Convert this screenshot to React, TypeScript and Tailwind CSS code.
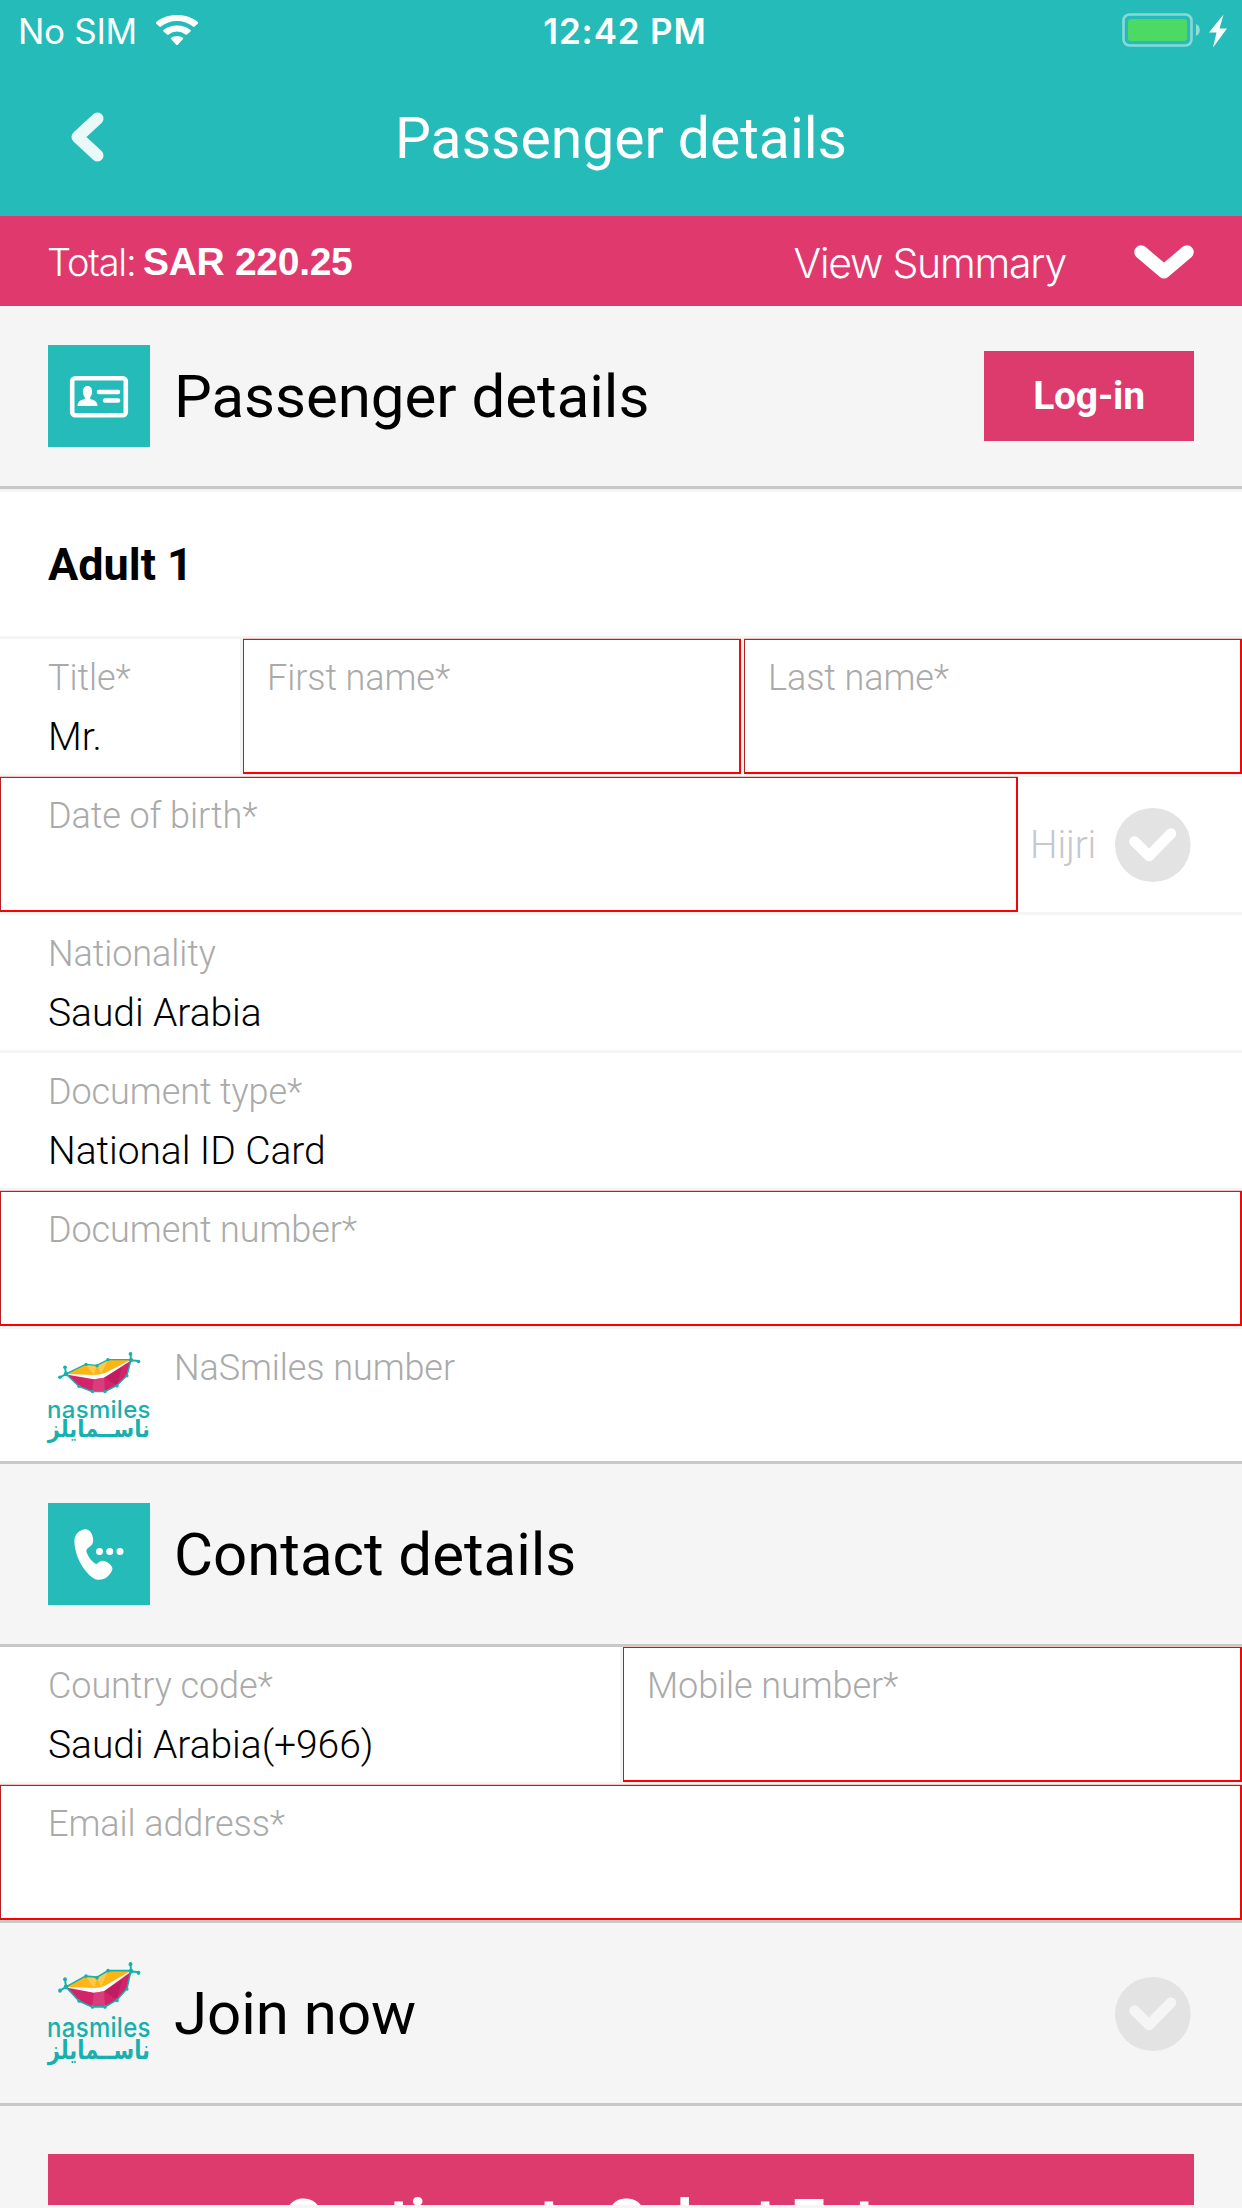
import type { ReactNode } from "react";

function Wifi() {
  return (
    <svg width="42" height="30" viewBox="0 0 42 35" preserveAspectRatio="none" fill="#fff">
      <path d="M21 0C29 0 36.500 3 42 8.400a1.300 1.300 0 0 1 0 1.600l-3.400 3.500a1.200 1.200 0 0 1-1.600 0A23 23 0 0 0 5 13.500a1.200 1.200 0 0 1-1.600 0L0 10a1.300 1.300 0 0 1 0-1.600C5.500 3 13 0 21 0z" />
      <path d="M21 12.200c5.200 0 9.800 1.800 13.500 5.300a1.200 1.200 0 0 1 0 1.700l-3.500 3.500a1.200 1.200 0 0 1-1.600 0 12.300 12.300 0 0 0-16.800 0 1.200 1.200 0 0 1-1.600 0l-3.500-3.500a1.200 1.200 0 0 1 0-1.700C11.200 14 15.800 12.200 21 12.200z" />
      <path d="M21 24.400c2.200 0 4.200.8 5.800 2.200a1 1 0 0 1 0 1.600l-5 6.500a1.100 1.100 0 0 1-1.600 0l-5-6.500a1 1 0 0 1 0-1.600c1.600-1.400 3.600-2.200 5.800-2.200z" />
    </svg>
  );
}

function Battery() {
  return (
    <svg width="106" height="36" viewBox="0 0 106 36">
      <rect x="1.500" y="1.500" width="68" height="31" rx="6" fill="none" stroke="#fff" strokeOpacity=".45" strokeWidth="2.600" />
      <rect x="6" y="6" width="59" height="22" rx="3" fill="#4cd964" />
      <path d="M74 11c5 1.500 5 10.500 0 12z" fill="#fff" fillOpacity=".5" />
      <path d="M101.500 1.500 87 19.500h7.500L91 34.500 105 15.500h-7.500z" fill="#fff" />
    </svg>
  );
}

function CardIcon() {
  return (
    <svg width="102" height="102" viewBox="0 0 102 102">
      <rect x="24.200" y="33.200" width="53.600" height="37" rx="3" fill="none" stroke="#fff" strokeWidth="4.600" />
      <path d="M39.500 41c3 0 4.800 2.400 4.600 6-.1 2.300-.9 4-1.900 5.200v1.700c3.300 1 7.300 2 7.300 7h-20c0-5 4-6 7.300-7v-1.700c-1-1.200-1.800-2.900-1.900-5.200-.2-3.600 1.600-6 4.600-6z" fill="#fff" />
      <path d="M51 47h19M57 55.500h13" stroke="#fff" strokeWidth="4.600" strokeLinecap="round" />
    </svg>
  );
}

function PhoneIcon() {
  return (
    <svg width="102" height="102" viewBox="0 0 102 102" fill="#fff">
      <path d="M34 27c5-2 9 1 10.500 6 1.200 4.500 1 8-2.500 10.500-3 2-4.500 3.500-3 7 2 4.500 4.500 7.500 8 10 2 1.200 2.500-.5 4.500-1.800 3-1.700 6-.9 9.500 1.800 4 3.300 4.500 6 1.500 9.500-3 5-8 7.500-14 6.500C41 74.500 28 59 26.500 40.500 26 34 28 29.500 34 27z" />
      <circle cx="51.500" cy="48.500" r="3.500" />
      <circle cx="61.700" cy="48.500" r="3.500" />
      <circle cx="72" cy="48.500" r="3.500" />
    </svg>
  );
}

function CheckCircle({ tick }: { tick: string }) {
  return (
    <svg width="76" height="74" viewBox="0 0 76 74" className="mt-px shrink-0">
      <ellipse cx="37.800" cy="37" rx="37.800" ry="37" fill="#e3e3e3" />
      <path d="M19.500 33.500 34 48 56 25.500" fill="none" stroke={tick} strokeWidth="10.500" strokeLinecap="round" strokeLinejoin="round" />
    </svg>
  );
}

function Lips() {
  return (
    <svg width="84" height="42" viewBox="0 0 84 44" preserveAspectRatio="none" className="absolute left-[9px] top-0">
      <path d="M9 23 28.500 13l11.500 1 11-6 23 0-24.500 15L37 24z" fill="#fdb515" />
      <path d="m28.500 13 8.500 11 3-9.500L44 23l7-15-11 6z" fill="#fed062" opacity=".7" />
      <path d="M9 23c9 2 17 3.500 28 2.500L48 22 75 7.500 47 25.500 38 29z" fill="#fff" />
      <path d="m9 23.500 28 5 10-1.500L74 9l-4 16-10 10-12 6.500H35L22 36z" fill="#d3246b" />
      <path d="m37 28.500 10-1.500 1 14.500H35z" fill="#e0528a" opacity=".55" />
      <path d="M47 27 65 16 60 35z" fill="#b5155a" opacity=".6" />
      <g stroke="#16b1ae" strokeWidth="1.500" fill="none">
        <path d="M9 23 28.500 13l11.500 1 11-6h23l-4 16.500L60 35l-12 6.500H35L22 36z" />
        <path d="m8 16 1 7-6 3.500M73.500 2l.5 6.500 7.500 1" strokeWidth="2" />
      </g>
      <g fill="#16b1ae">
        <circle cx="9" cy="23" r="2.300" /><circle cx="8" cy="16" r="1.900" /><circle cx="3" cy="26.500" r="1.900" />
        <circle cx="74" cy="8.500" r="2.300" /><circle cx="73.500" cy="2" r="1.900" /><circle cx="81.500" cy="10" r="1.900" />
        <circle cx="29" cy="13" r="1.700" /><circle cx="40" cy="14.500" r="1.700" /><circle cx="51" cy="8" r="1.700" />
        <circle cx="70" cy="25" r="1.600" /><circle cx="60" cy="35.500" r="1.700" /><circle cx="48" cy="41.500" r="1.700" />
        <circle cx="35.500" cy="41.500" r="1.700" /><circle cx="22" cy="36" r="1.700" />
      </g>
    </svg>
  );
}

function NasmilesLogo({ className = "" }: { className?: string }) {
  return (
    <div className={`relative h-[90px] w-[102px] shrink-0 text-[#16b1ae] ${className}`}>
      <Lips />
      <span className="absolute left-[-1px] top-[44px] whitespace-nowrap text-[24px] font-medium leading-[28px] tracking-[0.3px] [font-family:Inter,sans-serif]">nasmiles</span>
      <span dir="rtl" className="absolute right-0 top-[67px] origin-bottom scale-y-110 whitespace-nowrap text-[21px] font-bold leading-[24px] [font-family:'DejaVu_Sans',sans-serif]">ناســمايلز</span>
    </div>
  );
}

function IconTile({ children }: { children: ReactNode }) {
  return <div className="h-[102px] w-[102px] shrink-0 bg-[#25bbb9]">{children}</div>;
}

function SectionHeader({ icon, title, action }: { icon: ReactNode; title: string; action?: ReactNode }) {
  return (
    <div className="flex h-[183px] items-center border-b-[3px] border-[#c8c8c8] bg-[#f5f5f5] pl-12">
      {icon}
      <h2 className="ml-6 mt-[1px] text-[60px] leading-[70px] tracking-[-0.03px]">{title}</h2>
      <div className="ml-auto">{action}</div>
    </div>
  );
}

function Field({ label, value, className = "", pad = "pl-12", error = false }: { label: string; value?: string; className?: string; pad?: string; error?: boolean }) {
  return (
    <div className={`relative h-[135px] font-light ${pad} ${className}`}>
      {error && <div className="pointer-events-none absolute inset-0 border-b-2 border-l border-r-2 border-t border-b-[#ff0000] border-l-[#b22222] border-r-[#f00808] border-t-[#b22222] shadow-[0_-1px_0_#f3c4c4]" />}
      <div className="pt-[18px] text-[36px] leading-[42px] tracking-[-0.08px] text-[#aaaaaa]">{label}</div>
      {value && <div className="mt-[14px] text-[39px] leading-[48px] tracking-[-0.06px] text-black">{value}</div>}
    </div>
  );
}

const row = "flex border-b-[3px] border-[#f4f4f4]";

export default function App() {
  return (
    <main className="h-[2208px] w-[1242px] overflow-hidden bg-white text-black [font-family:Roboto,sans-serif]">
      <header className="h-[216px] bg-[#25bbb9] text-white">
        <div className="grid h-[60px] grid-cols-3 items-center text-[35px] leading-[42px] [font-family:Inter,sans-serif]">
          <div className="flex items-center pl-[18px]">
            <span className="mt-[2px] w-[122px] whitespace-nowrap font-normal tracking-[-0.3px]">No SIM</span>
            <div className="ml-[16px]"><Wifi /></div>
          </div>
          <div className="mt-[2px] whitespace-nowrap pl-[8px] text-center text-[35px] font-semibold tracking-[0.85px]">12:42 PM</div>
          <div className="mt-[2px] flex justify-end pr-[14px]"><Battery /></div>
        </div>
        <div className="grid h-[156px] grid-cols-[200px_1fr_200px] items-center">
          <svg width="34" height="50" viewBox="0 0 34 50" className="-mt-[3px] ml-[70px]">
            <path d="M27.500 6.500 7.500 25l20 18.500" fill="none" stroke="#e9f8f8" strokeWidth="12" strokeLinecap="round" strokeLinejoin="round" />
          </svg>
          <h1 className="mt-[2px] text-center text-[57px] leading-[66px]">Passenger details</h1>
        </div>
      </header>

      <div className="flex h-[90px] items-center bg-[#e0396d] pl-12 pr-12 pt-[2px] text-white">
        <span className="-ml-px w-[96px] whitespace-nowrap text-[38px] font-light leading-[46px] tracking-[-1.2px] [font-family:Inter,sans-serif]">Total:</span>
        <span className="whitespace-nowrap text-[39px] font-bold leading-[46px] tracking-[-0.3px] [font-family:'Liberation_Sans',sans-serif]">SAR 220.25</span>
        <span className="ml-auto mr-[68px] mt-[2px] whitespace-nowrap text-[41px] font-light leading-[50px] tracking-[-1.25px] [font-family:Inter,sans-serif]">View Summary</span>
        <svg width="60" height="34" viewBox="0 0 60 34">
          <path d="M7 7 30 26.500 53 7" fill="none" stroke="#fff" strokeWidth="13.500" strokeLinecap="round" strokeLinejoin="round" />
        </svg>
      </div>

      <SectionHeader
        icon={<IconTile><CardIcon /></IconTile>}
        title="Passenger details"
        action={<button className="mr-12 h-[90px] w-[210px] bg-[#dd3a6d] text-[39px] font-bold tracking-[-0.2px] text-white">Log-in</button>}
      />
      <div className="flex h-[150px] items-center border-b-[3px] border-t-[3px] border-[#f4f4f4] pl-12">
        <h3 className="mt-[2px] text-[45px] font-bold leading-[52px]">Adult 1</h3>
      </div>
      <div className={row}>
        <Field label="Title*" value="Mr." className="w-[243px] border-r-[3px] border-[#f4f4f4]" />
        <Field label="First name*" error pad="pl-6" className="w-[498px]" />
        <div className="w-[3px] bg-[#f4f4f4]" />
        <Field label="Last name*" error pad="pl-6" className="w-[498px]" />
      </div>
      <div className={row}>
        <Field label="Date of birth*" error className="w-[1018px]" />
        <div className="flex flex-1 items-center pl-[12px] text-[39px] font-light text-[#c7c7cd]">
          <span className="mt-[2px] w-[85px] tracking-[-0.2px]">Hijri</span>
          <CheckCircle tick="#fff" />
        </div>
      </div>
      <div className={row}><Field label="Nationality" value="Saudi Arabia" /></div>
      <div className={row}><Field label="Document type*" value="National ID Card" /></div>
      <div className={row}><Field label="Document number*" error className="w-full" /></div>
      <div className="flex h-[135px] border-b-[3px] border-[#c8c8c8] pl-12">
        <div className="pt-[23px]"><NasmilesLogo /></div>
        <Field label="NaSmiles number" pad="pl-6" />
      </div>

      <SectionHeader icon={<IconTile><PhoneIcon /></IconTile>} title="Contact details" />
      <div className={row}>
        <Field label="Country code*" value="Saudi Arabia(+966)" className="w-[623px] border-r-[3px] border-[#f4f4f4]" />
        <Field label="Mobile number*" error pad="pl-6" className="w-[619px]" />
      </div>
      <div className="border-b-[3px] border-[#c8c8c8]"><Field label="Email address*" error /></div>
      <SectionHeader
        icon={<NasmilesLogo className="scale-y-[1.133]" />}
        title="Join now"
        action={<div className="mr-[51px]"><CheckCircle tick="#f5f5f5" /></div>}
      />
      <div className="h-[102px] bg-[#f5f5f5] px-12 pt-12">
        <div className="h-[51px] overflow-hidden bg-[#dd3a6d] pt-[36px]">
          <button className="block w-full text-center text-[60px] font-bold leading-[62px] tracking-[-0.1px] text-white">Continue to Select Extras</button>
        </div>
      </div>
    </main>
  );
}
